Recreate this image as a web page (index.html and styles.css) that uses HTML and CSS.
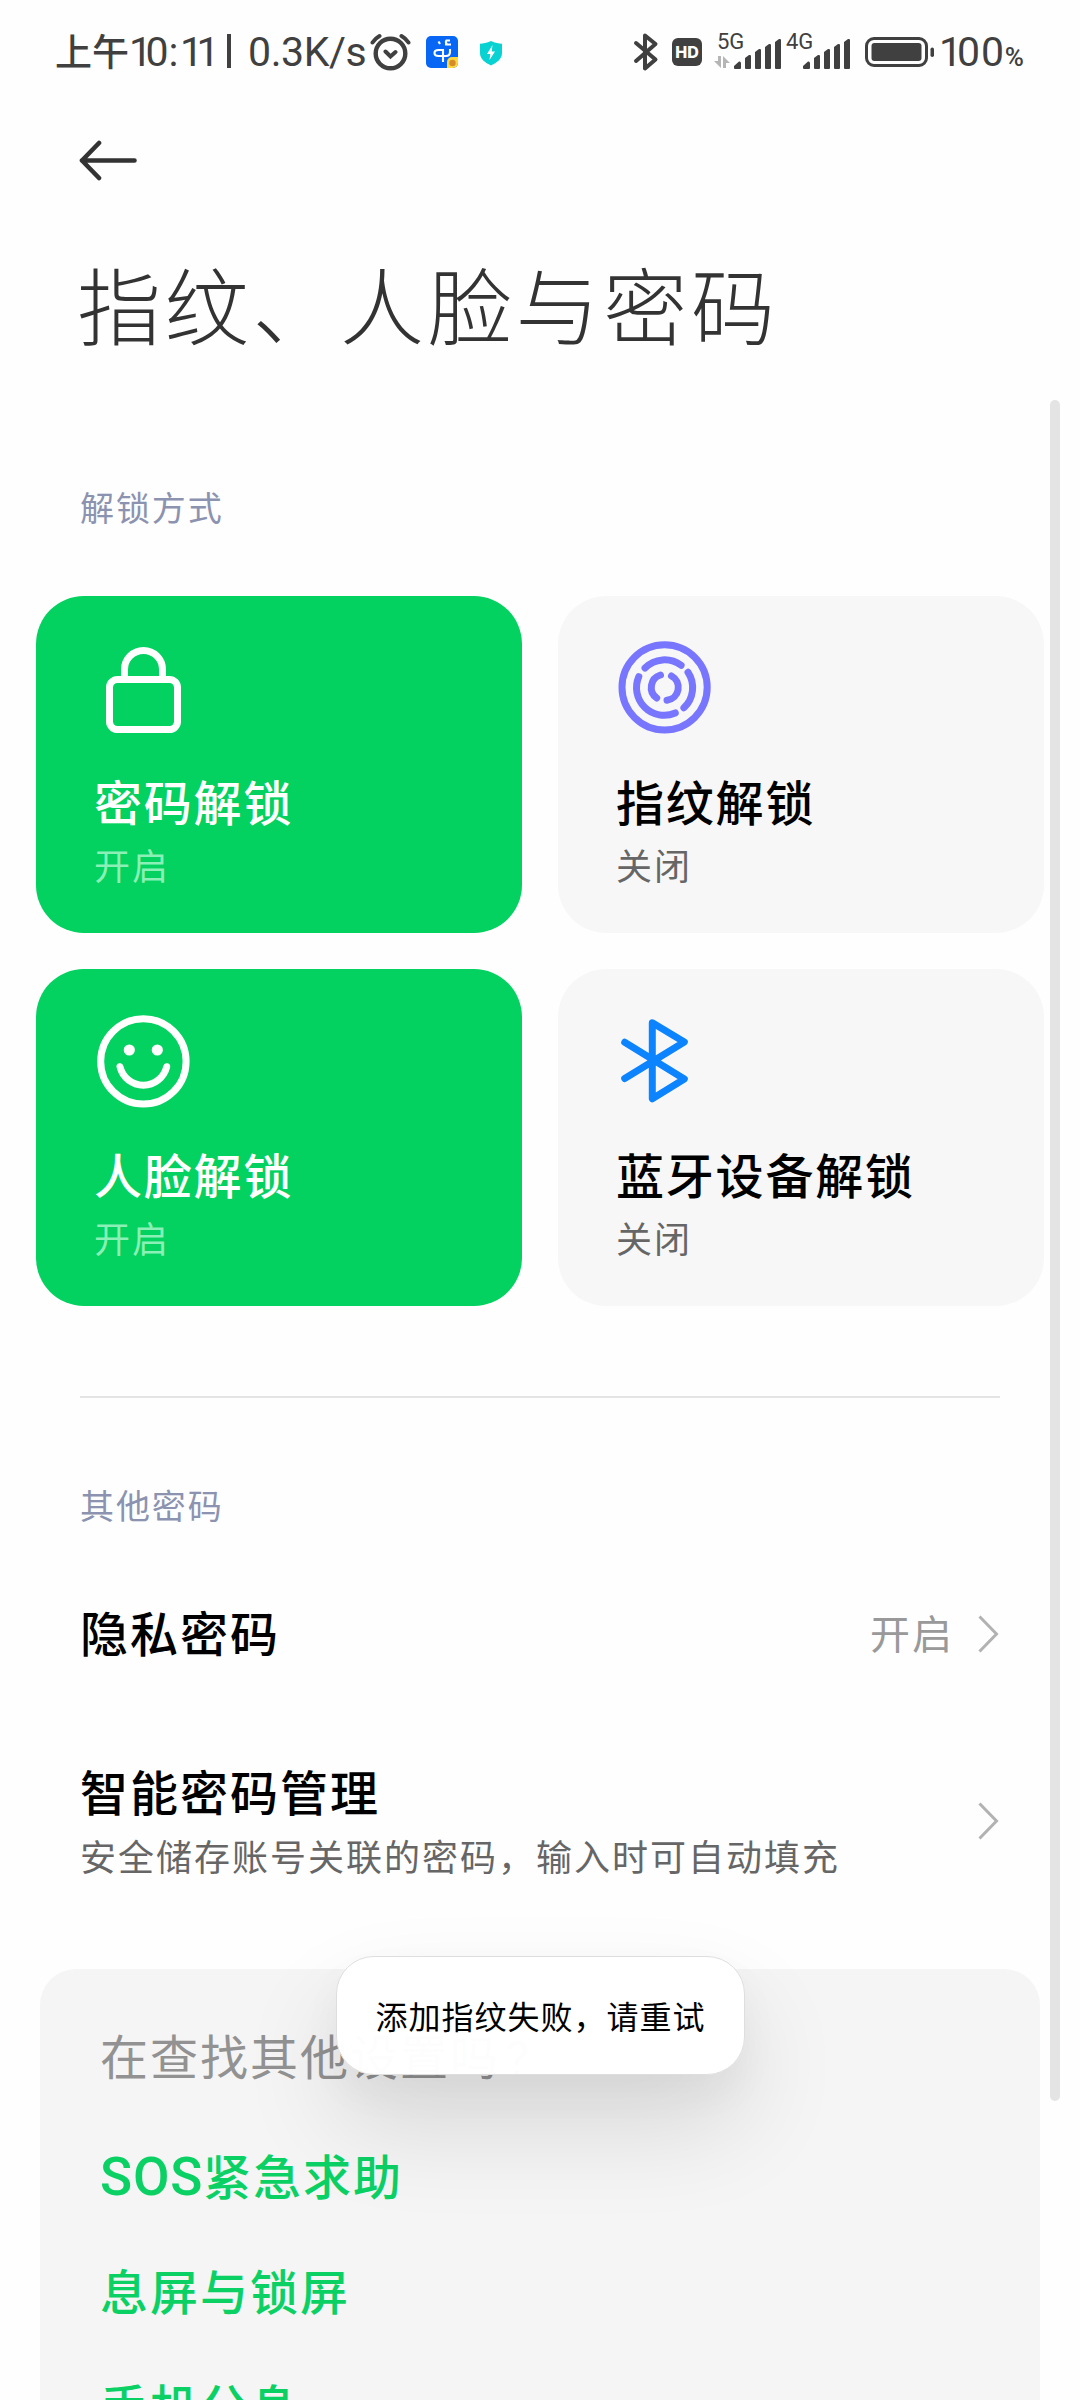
FILE: index.html
```html
<!DOCTYPE html>
<html lang="zh-CN">
<head>
<meta charset="utf-8">
<title>指纹、人脸与密码</title>
<link rel="stylesheet" href="styles.css">
</head>
<body>
<div class="screen">
  <header class="status">
    <span class="clock"><span class="cjk">上午</span><span class="one">1</span>0<span class="colon">:</span><span class="one">11</span></span>
    <span class="pipe"></span>
    <span class="speed">0.3K/s</span>
    <svg class="i-alarm" width="42" height="40" viewBox="0 0 42 40" fill="none" stroke="#404040" stroke-linecap="round"><circle cx="21.5" cy="21.5" r="14.8" stroke-width="4.4"/><path d="M16.5 19.5l5 5 5-4.500M3.500 10.500Q6 6.500 10.500 4M32.500 4Q37 6.500 39.500 10.500" stroke-width="4"/></svg>
    <svg class="i-app" width="32" height="32" viewBox="0 0 32 32"><rect width="32" height="32" rx="5" fill="#0866f5"/><path d="M21 32v-6a5 5 0 0 1 5-5h6v6a5 5 0 0 1-5 5z" fill="#ffd83a"/><circle cx="26.500" cy="27" r="3.200" fill="#d58a2c"/><path d="M17 13v13M17 14h-4.500q-4 0-4 3t4 3h7.500q4 0 4-4v-3M12.500 5.500l1.500 2.500M24 4.500h-3.500q-1.500 1.800.500 3.300M19 8.500h6" fill="none" stroke="#fff" stroke-width="2.100"/></svg>
    <svg class="i-shield" width="24" height="26" viewBox="0 0 24 26"><path d="M12 1C8 3 4 3.500 1 3.800V13c0 6 5 9.500 11 12.500C18 22.500 23 19 23 13V3.800C20 3.500 16 3 12 1z" fill="#08d2d2"/><path d="M13.500 5L8 14h3.300l-.8 6L16 11.500h-3.300z" fill="#fff"/></svg>
    <svg class="i-bt" width="26" height="40" viewBox="0 0 26 40" fill="none" stroke="#404040" stroke-width="4" stroke-linejoin="round" stroke-linecap="round"><path d="M3 11l19.500 16.500L12 36.500V3.500L22.500 12 3 29"/></svg>
    <span class="hd">HD</span>
    <span class="sim"><span class="net">5G</span>
      <svg class="arrows" width="16" height="12" viewBox="0 0 16 12" fill="#b5b5b5"><path d="M4 0h3v12L0 5h4zM9 12h3V7h4L9 0z"/></svg>
      <svg class="bars" width="48" height="31" viewBox="0 0 48 31" fill="#404040"><path d="M0 30v-2l5-4.500q2-.5 2 2V30q0 1-1 1H1q-1 0-1-1zM11 30V20l4-3q2-.5 2 1v12q0 1-1 1h-4q-1 0-1-1zM21 30V14l4-3q2-.5 2 1v18q0 1-1 1h-4q-1 0-1-1zM31 30V9l4-3q2-.5 2 1v23q0 1-1 1h-4q-1 0-1-1zM41 30V4l4-3q2-.5 2 1v28q0 1-1 1h-4q-1 0-1-1z"/></svg>
    </span>
    <span class="sim sim2"><span class="net">4G</span>
      <svg class="bars" width="48" height="31" viewBox="0 0 48 31" fill="#404040"><path d="M0 30v-2l5-4.500q2-.5 2 2V30q0 1-1 1H1q-1 0-1-1zM11 30V20l4-3q2-.5 2 1v12q0 1-1 1h-4q-1 0-1-1zM21 30V14l4-3q2-.5 2 1v18q0 1-1 1h-4q-1 0-1-1zM31 30V9l4-3q2-.5 2 1v23q0 1-1 1h-4q-1 0-1-1zM41 30V4l4-3q2-.5 2 1v28q0 1-1 1h-4q-1 0-1-1z"/></svg>
    </span>
    <svg class="i-bat" width="70" height="30" viewBox="0 0 70 30"><rect x="1.500" y="1.500" width="60" height="27" rx="7.500" fill="none" stroke="#404040" stroke-width="3"/><rect x="6.500" y="6" width="50" height="18" rx="3" fill="#404040"/><rect x="65.500" y="10.500" width="3.500" height="9.500" rx="1.700" fill="#404040"/></svg>
    <span class="pct"><span class="one">1</span>00</span><span class="pct-sign">%</span>
  </header>

  <nav class="back"><svg width="60" height="42" viewBox="0 0 60 42" fill="none" stroke="#333" stroke-width="4.600" stroke-linecap="round" stroke-linejoin="round"><path d="M55.500 21.500H3L20 4M3 21.500L20 39"/></svg></nav>
  <h1 class="title">指纹、人脸与密码</h1>

  <main class="content">
    <h2 class="label label-first">解锁方式</h2>
    <section class="cards">
      <article class="card on">
        <svg class="icon" viewBox="0 0 96 96" fill="none" stroke="#fff" stroke-width="7"><rect x="15.500" y="40.500" width="68" height="50" rx="8"/><path d="M30.500 40V30.500a19 19 0 0 1 38 0V40"/></svg>
        <h3>密码解锁</h3><p>开启</p>
      </article>
      <article class="card">
        <svg class="icon" viewBox="0 0 96 96" fill="none" stroke="#7876ff" stroke-width="7" stroke-linecap="round"><g transform="translate(48.600 48.300)"><circle r="42.600"/><path d="M-19.600-19.300A27.700 27.700 0 0 1 16.500-22M23.400-15A27.700 27.700 0 0 1 19.300 20.500M10.700 25.700A27.700 27.700 0 0 1-25.800-10.700M6.900-11.300A13 13 0 0 1 2.400 13M-4.100-12.300A13 13 0 0 0-7.900 10.700"/></g></svg>
        <h3>指纹解锁</h3><p>关闭</p>
      </article>
      <article class="card on">
        <svg class="icon" viewBox="0 0 96 96" fill="none" stroke="#fff" stroke-width="7" stroke-linecap="round"><circle cx="49.400" cy="49.400" r="42.700"/><path d="M26 54.700A24 24 0 0 0 72.700 54.700"/><g fill="#fff" stroke="none"><circle cx="35.300" cy="38" r="5.600"/><circle cx="63.300" cy="38" r="5.600"/></g></svg>
        <h3>人脸解锁</h3><p>开启</p>
      </article>
      <article class="card">
        <svg class="icon" viewBox="0 0 96 96" fill="none" stroke="#0d84ff" stroke-width="7" stroke-linecap="round" stroke-linejoin="round"><path d="M8.700 30.300L68.300 67 36.300 86.700V10.700L68.300 30 8.700 66.500"/></svg>
        <h3>蓝牙设备解锁</h3><p>关闭</p>
      </article>
    </section>
    <hr class="divider">
    <h2 class="label label-second">其他密码</h2>
    <section class="rows">
      <div class="row row-a">
        <h3>隐私密码</h3>
        <span class="value">开启</span>
        <svg class="chev" width="22" height="38" viewBox="0 0 22 38" fill="none" stroke="#b2b2b2" stroke-width="3"><path d="M1.500 1.500L18.500 19 1.500 36.500"/></svg>
      </div>
      <div class="row row-b">
        <div class="text"><h3>智能密码管理</h3><p>安全储存账号关联的密码，输入时可自动填充</p></div>
        <svg class="chev" width="22" height="38" viewBox="0 0 22 38" fill="none" stroke="#b2b2b2" stroke-width="3"><path d="M1.500 1.500L18.500 19 1.500 36.500"/></svg>
      </div>
    </section>
    <section class="more">
      <p class="ask">在查找其他设置吗<span class="latin">?</span></p>
      <a class="link"><span class="latin">SOS</span>紧急求助</a>
      <a class="link">息屏与锁屏</a>
      <a class="link">手机分身</a>
    </section>
  </main>
  <div class="scrollbar"></div>
  <div class="toast">添加指纹失败，请重试</div>
</div>
</body>
</html>
```

FILE: styles.css
```css
* { box-sizing: border-box; }
html, body { margin: 0; padding: 0; }
body { background: #fefefe; font-family: "Noto Sans CJK SC", sans-serif; color: #000; }
h1, h2, h3, p { margin: 0; font-weight: 400; white-space: nowrap; }
svg { display: block; flex: none; }
.screen { position: relative; width: 1080px; height: 2400px; overflow: hidden; display: flex; flex-direction: column; }

/* status bar */
.status { height: 104px; flex: none; display: flex; align-items: flex-start; padding-left: 55px; color: #404040; font-family: Roboto, "Noto Sans CJK SC", sans-serif; font-size: 41px; line-height: 48px; white-space: nowrap; }
.status > * { flex: none; }
.clock { width: 172px; margin-top: 28px; letter-spacing: 0; }
.clock .cjk { font-family: "Noto Sans CJK SC", sans-serif; font-size: 37px; font-weight: 500; line-height: 1; }
.clock .one { letter-spacing: -6.500px; }
.clock .colon { letter-spacing: 1.500px; }
.pipe { width: 4px; height: 34px; margin-top: 34px; background: #404040; }
.speed { width: 121px; margin: 28px 0 0 17px; letter-spacing: -.4px; }
.i-alarm { margin-top: 32px; }
.i-app { margin: 36px 0 0 15px; }
.i-shield { margin: 40px 0 0 21px; }
.i-bt { margin: 32px 0 0 130px; }
.hd { margin: 38px 0 0 13px; width: 30px; height: 28px; border-radius: 6px; background: #404040; color: #fff; font: 800 16px/29px Inter, sans-serif; text-align: center; }
.sim { position: relative; width: 68px; height: 36px; margin: 33px 0 0 12px; }
.sim2 { width: 67px; margin-left: 2px; }
.net { position: absolute; left: 3px; top: -1px; font-size: 22px; line-height: 20px; }
.sim2 .net { left: 2px; }
.arrows { position: absolute; left: 0; top: 23px; }
.bars { position: absolute; right: 0; top: 5px; }
.i-bat { margin: 37px 0 0 14px; }
.pct { margin: 28px 0 0 4px; letter-spacing: .8px; }
.pct .one { letter-spacing: -5px; }
.pct-sign { margin-top: 33px; font-size: 26px; font-weight: 500; }

/* heading */
.back { height: 113px; flex: none; padding: 35px 0 0 79px; }
.title { height: 183px; flex: none; padding-left: 77px; font-size: 84px; font-weight: 300; line-height: 171px; letter-spacing: 3.700px; color: #333; }

/* unlock methods */
.content { display: flex; flex-direction: column; }
.label { padding-left: 80px; font-size: 34px; line-height: 50px; letter-spacing: 1.900px; color: #8c93b0; }
.label-first { margin-top: 82px; }
.cards { display: grid; grid-template-columns: 486px 486px; grid-auto-rows: 337px; gap: 36px; padding-left: 36px; margin-top: 64px; }
.card { background: #f7f7f7; border-radius: 48px; padding: 43px 0 0 58px; }
.icon { width: 96px; height: 96px; }
.card h3 { margin-top: 35px; font-size: 48px; font-weight: 500; line-height: 60px; letter-spacing: 1.800px; }
.card p { margin-top: 8px; font-size: 36px; line-height: 52px; letter-spacing: 1.900px; color: #666; }
.card.on { background: #03d160; color: #fff; }
.card.on p { color: #8af0b5; }

/* other passwords */
.divider { width: 920px; height: 2px; margin: 90px 0 0 80px; border: 0; background: #e4e4e4; }
.label-second { margin-top: 82px; }
.rows { padding: 0 80px; }
.row { display: flex; align-items: center; }
.row h3 { font-size: 48px; font-weight: 500; line-height: 60px; letter-spacing: 2px; }
.row-a { height: 130px; margin-top: 37px; }
.row-a h3 { margin-bottom: 2px; }
.value { margin-left: auto; font-size: 40px; letter-spacing: 2px; line-height: 56px; color: #999; }
.row-a .chev { margin: 4px 0 0 24px; }
.row-b { height: 170px; margin-top: 38px; }
.row-b .chev { margin: 2px 0 0 auto; }
.row-b p { font-size: 36px; line-height: 52px; letter-spacing: 2px; margin-top: 9px; color: #666; }

/* suggestions */
.more { width: 1000px; height: 500px; margin: 64px 0 0 40px; padding: 55px 60px 0; display: flex; flex-direction: column; border-radius: 36px; background: #f5f5f5; }
.ask { font-size: 48px; line-height: 60px; letter-spacing: 2px; color: #929292; }
.ask .latin { font-family: Roboto, sans-serif; line-height: 1; margin-left: 6px; }
.link { margin-top: 55px; font-size: 48px; font-weight: 500; line-height: 60px; letter-spacing: 2px; color: #0bd165; }
.ask + .link { margin-top: 60px; }
.link .latin { font-family: Roboto, sans-serif; font-size: 53px; line-height: 1; letter-spacing: .8px; }

/* overlays */
.scrollbar { position: absolute; left: 1050px; top: 400px; width: 10px; height: 1701px; border-radius: 5px; background: #e4e4e4; }
.toast { position: absolute; left: 336px; top: 1956px; width: 409px; height: 119px; border: 1px solid #dedede; border-radius: 38px; background: rgba(255,255,255,.98); box-shadow: 0 50px 100px rgba(0,0,0,.12), 0 18px 40px rgba(0,0,0,.04); text-align: center; font-size: 32px; line-height: 116px; letter-spacing: 1px; white-space: nowrap; }
```
